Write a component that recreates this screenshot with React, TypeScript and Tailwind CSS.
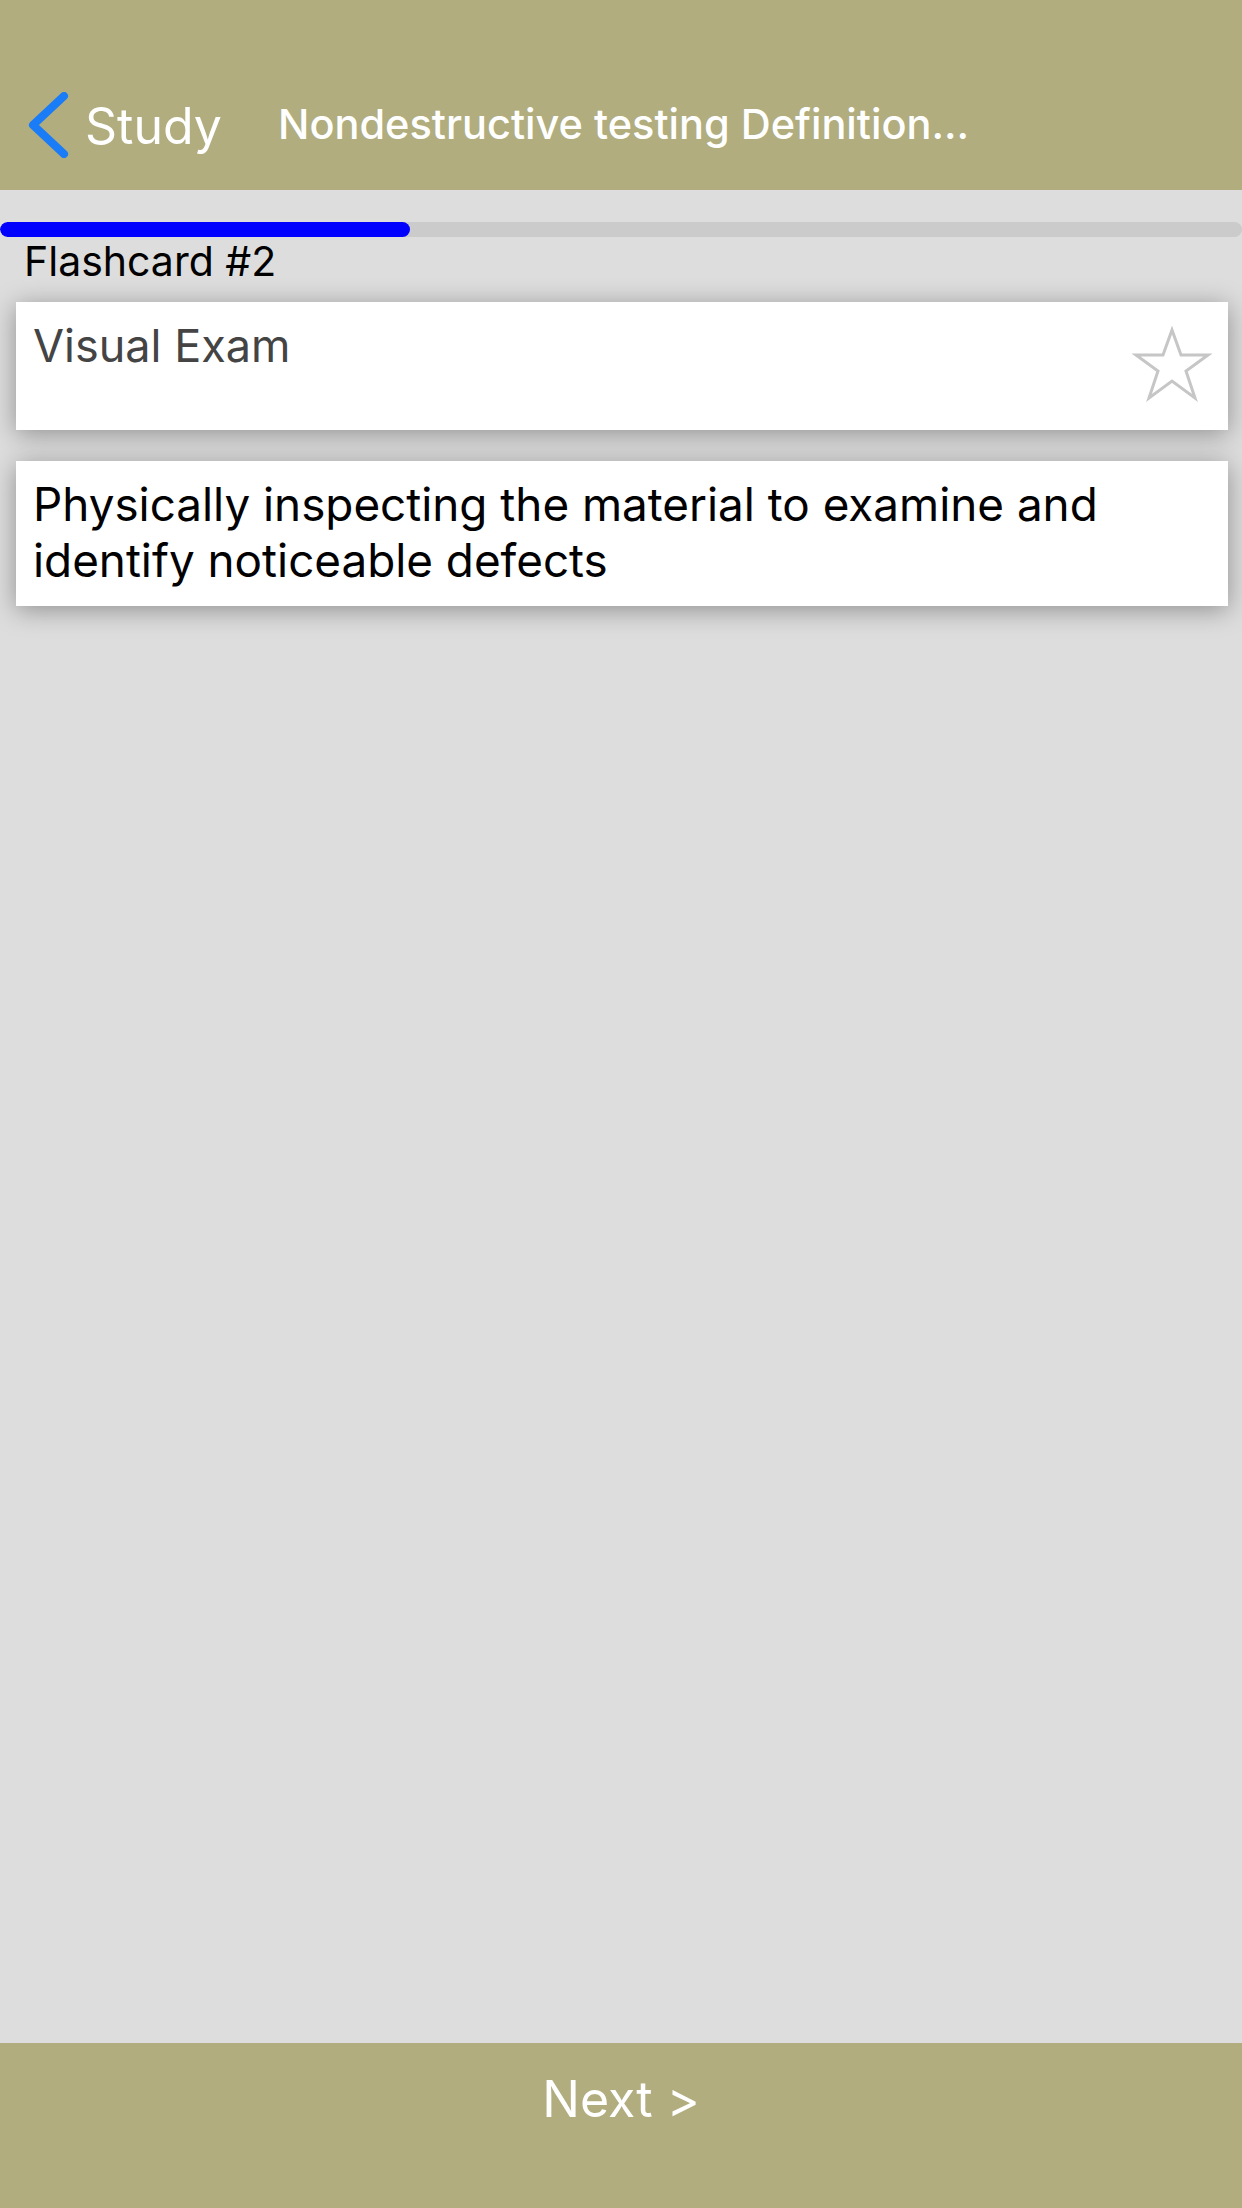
import React from 'react';

const FONT = { fontFamily: 'Inter, "Liberation Sans", Arial, sans-serif' };

const BackChevron: React.FC = () => (
  <svg width="44" height="66" viewBox="0 0 44 66" className="shrink-0">
    <polyline
      points="38,4 7,33 38,62"
      fill="none"
      stroke="#1a7cf6"
      strokeWidth="8"
      strokeLinecap="round"
      strokeLinejoin="round"
    />
  </svg>
);

const StarOutline: React.FC = () => (
  <svg width="80" height="76" viewBox="0 0 80 76">
    <polygon
      points="40,4 49,29 76,29 54,45 63,72 40,55 17,72 26,45 4,29 31,29"
      fill="none"
      stroke="#c6c6c6"
      strokeWidth="3"
      strokeLinejoin="miter"
    />
  </svg>
);

const App: React.FC = () => {
  const progress = 410;

  return (
    <div className="w-[1242px] h-[2208px] flex flex-col bg-[#dddddd]" style={FONT}>
      {/* Header */}
      <div className="h-[190px] bg-[#b1ad7e] pt-[60px] shrink-0">
        <div className="h-[130px] flex items-center">
          <div className="flex items-center pl-[26px] w-[278px]">
            <BackChevron />
            <span className="ml-[15px] text-[50px] leading-none text-white pt-[2px]">Study</span>
          </div>
          <span className="text-[41.5px] leading-none font-medium text-white">
            Nondestructive testing Definition...
          </span>
        </div>
      </div>

      {/* Content */}
      <div className="flex-1 pt-[32px]">
        <div className="h-[15px] rounded-full bg-[#cbcbcb] overflow-hidden">
          <div className="h-full rounded-full bg-[#0000ff]" style={{ width: progress }} />
        </div>
        <div className="pl-[24px] text-[41px] leading-[48px] text-black">Flashcard #2</div>

        <div className="ml-[16px] mr-[14px] mt-[17px] h-[128px] bg-white shadow-[0_4px_24px_rgba(0,0,0,0.35)] flex justify-between pl-[17px] pr-[16px] pt-[16px]">
          <span className="text-[45px] leading-[56px] text-[#444444]">Visual Exam</span>
          <div className="pt-[8px]">
            <StarOutline />
          </div>
        </div>

        <div className="ml-[16px] mr-[14px] mt-[31px] bg-white shadow-[0_4px_24px_rgba(0,0,0,0.35)] pl-[17px] pr-[40px] pt-[16px] pb-[17px]">
          <p className="text-[45.8px] leading-[56px] text-black">
            Physically inspecting the material to examine and identify noticeable defects
          </p>
        </div>
      </div>

      {/* Footer */}
      <div className="h-[165px] bg-[#b1ad7e] shrink-0 flex justify-center pt-[26px]">
        <span className="text-[50px] leading-[60px] text-white">Next &gt;</span>
      </div>
    </div>
  );
};

export default App;
